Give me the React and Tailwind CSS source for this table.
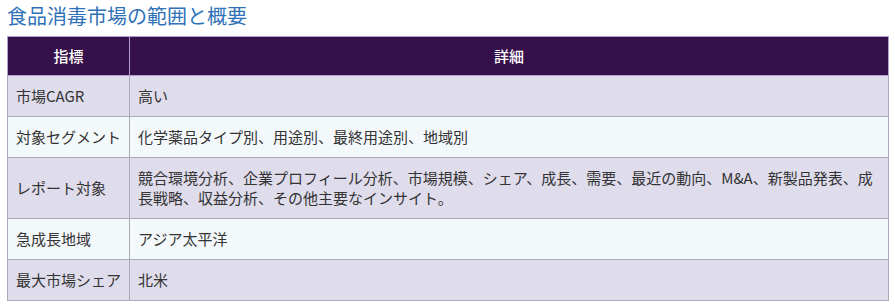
export default function App() {
  const rows = [
    ["市場CAGR", "高い"],
    ["対象セグメント", "化学薬品タイプ別、用途別、最終用途別、地域別"],
    ["レポート対象", "競合環境分析、企業プロフィール分析、市場規模、シェア、成長、需要、最近の動向、M&A、新製品発表、成長戦略、収益分析、その他主要なインサイト。"],
    ["急成長地域", "アジア太平洋"],
    ["最大市場シェア", "北米"],
  ];
  return (
    <div className="bg-white w-[895px] h-[307px] pl-[7px] pt-[2px]" style={{ fontFamily: '"Noto Sans CJK JP", "Noto Sans", sans-serif' }}>
      <h2 className="text-[20px] leading-[28px] text-[#2f72b8] font-normal">食品消毒市場の範囲と概要</h2>
      <table className="mt-[6px] w-[882px] border-collapse text-[15px] leading-[20px] text-[#333333]">
        <thead>
          <tr className="bg-[#36104a] text-white">
            <th className="w-[122px] border border-[#b49fcc] py-[9px] font-medium">指標</th>
            <th className="border border-[#b49fcc] py-[9px] font-medium">詳細</th>
          </tr>
        </thead>
        <tbody>
          {rows.map((r, i) => (
            <tr key={i} className={i % 2 === 0 ? "bg-[#dfdcec]" : "bg-[#f3f8fb]"}>
              <td className="border border-[#aba8ba] px-[8px] py-[10px] whitespace-nowrap">{r[0]}</td>
              <td className="border border-[#aba8ba] px-[8px] py-[10px]">{r[1]}</td>
            </tr>
          ))}
        </tbody>
      </table>
    </div>
  );
}
